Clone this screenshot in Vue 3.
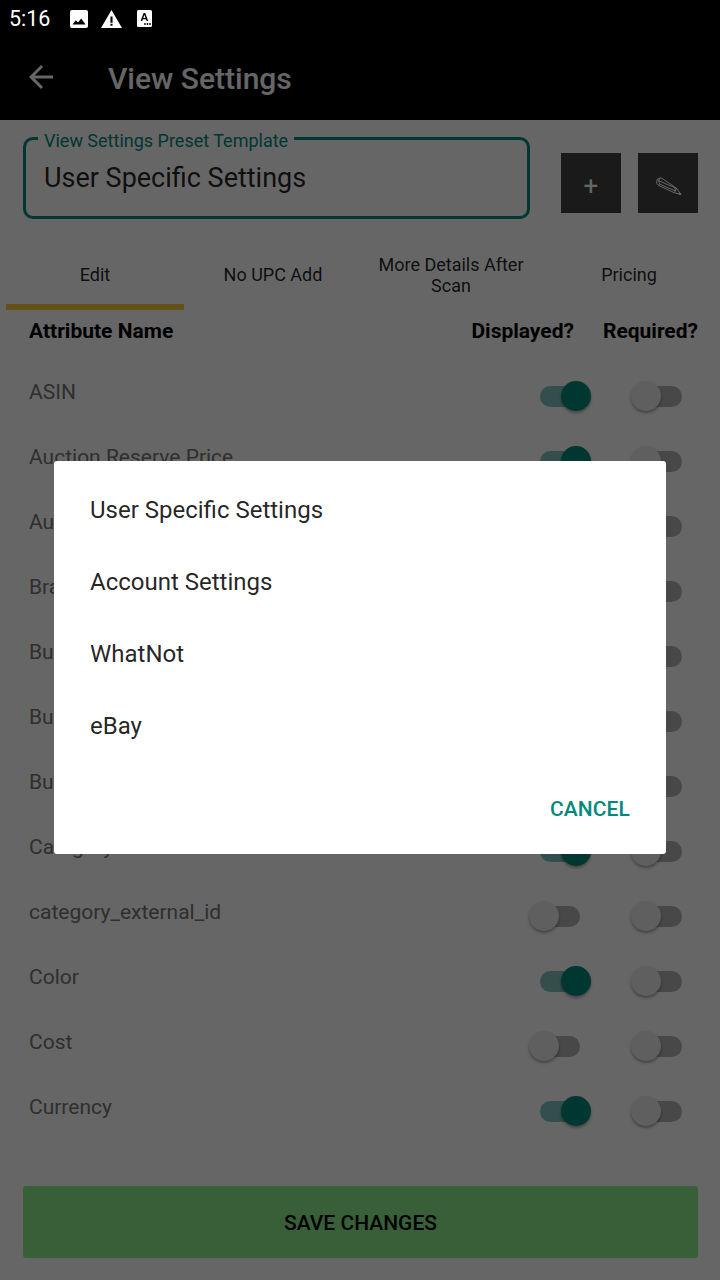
<script setup>
const tabs = [
  { label: 'Edit', active: true },
  { label: 'No UPC Add' },
  { label: 'More Details After Scan' },
  { label: 'Pricing' },
]

const attributes = [
  { name: 'ASIN', displayed: true },
  { name: 'Auction Reserve Price', displayed: true },
  { name: 'Auction Start Price', displayed: true },
  { name: 'Brand', displayed: true },
  { name: 'Bullet Point 1', displayed: true },
  { name: 'Bullet Point 2', displayed: true },
  { name: 'Buy It Now Price', displayed: true },
  { name: 'Category', displayed: true },
  { name: 'category_external_id', displayed: false },
  { name: 'Color', displayed: true },
  { name: 'Cost', displayed: false },
  { name: 'Currency', displayed: true },
]

const presets = ['User Specific Settings', 'Account Settings', 'WhatNot', 'eBay']
</script>

<template>
  <div class="screen">
    <header class="app-header">
      <div class="status-bar">
        <span class="time">5:16</span>
        <svg class="st-image" viewBox="0 0 18 18" width="18" height="18">
          <path fill="#fff" fill-rule="evenodd" d="M2 0h14a2 2 0 0 1 2 2v14a2 2 0 0 1-2 2H2a2 2 0 0 1-2-2V2a2 2 0 0 1 2-2zM2.5 14.5h13L11.2 8.6 8 12.6 5.8 10.2z" />
        </svg>
        <svg class="st-warn" viewBox="0 0 20 17" width="21" height="18">
          <path fill="#fff" fill-rule="evenodd" d="M10 0l10 17H0zM9 6v6h2V6zM9 13v2h2v-2z" />
        </svg>
        <svg class="st-card" viewBox="0 0 15 17" width="15" height="17">
          <rect width="15" height="17" rx="1.5" fill="#fff" />
          <path d="M3.6 11L6.6 3h1.6l3 8h-1.6l-.6-1.8H5.8L5.2 11zM6.3 7.9h2.2L7.4 4.8z" fill="#000" />
          <circle cx="8" cy="14" r=".9" fill="#000" />
          <circle cx="10.5" cy="14" r=".9" fill="#000" />
          <circle cx="13" cy="14" r=".9" fill="#000" />
        </svg>
      </div>
      <div class="toolbar">
        <svg class="back" viewBox="0 0 24 24" width="24" height="24">
          <path d="M24 10.5H5.7l8.4-8.4L12 0 0 12l12 12 2.1-2.1-8.4-8.4H24z" fill="#fff" />
        </svg>
        <h1>View Settings</h1>
      </div>
    </header>

    <section class="preset-row">
      <div class="preset-field">
        <span class="preset-label">View Settings Preset Template</span>
        <span class="preset-value">User Specific Settings</span>
      </div>
      <button class="square-btn plus">+</button>
      <button class="square-btn pencil">
        <svg viewBox="0 0 26 18" width="26" height="18" fill="none" stroke="#fff" stroke-width="1" stroke-linejoin="round">
          <path d="M4 .8L1 2.6.6 6.2 2.4 8.4 18 15.6l7 1.8-4.4-6L6 1.4z" />
          <path d="M1 2.6l1.8 1.2 1 3.4-1.4 1.2M2.8 3.8L4 .8M3.8 7.2L19.4 14l1.2-2.6M2.8 3.8L18.6 10.6l2 .8M18.6 10.6l.8 3.4-1.4 1.6" />
          <path d="M23.4 15.6l1.6 1.8-2.8-.6z" fill="#fff" />
        </svg>
      </button>
    </section>

    <nav class="tabs">
      <div v-for="tab in tabs" :key="tab.label" class="tab" :class="{ active: tab.active }">
        <span>{{ tab.label }}</span>
      </div>
    </nav>

    <div class="col-head">
      <span class="col-name">Attribute Name</span>
      <span>Displayed?</span>
      <span>Required?</span>
    </div>

    <div class="list">
      <div v-for="attr in attributes" :key="attr.name" class="row">
        <span class="row-name">{{ attr.name }}</span>
        <div class="switch" :class="{ on: attr.displayed }">
          <i class="track"></i><i class="thumb"></i>
        </div>
        <div class="switch">
          <i class="track"></i><i class="thumb"></i>
        </div>
      </div>
    </div>

    <footer class="footer">
      <button class="save">SAVE CHANGES</button>
    </footer>

    <div class="scrim">
      <div class="dialog">
        <div v-for="item in presets" :key="item" class="dialog-item">{{ item }}</div>
        <div class="dialog-actions">
          <span class="cancel">CANCEL</span>
        </div>
      </div>
    </div>
  </div>
</template>

<style scoped>
.screen {
  position: relative;
  width: 720px;
  height: 1280px;
  display: flex;
  flex-direction: column;
  overflow: hidden;
  background: #fff;
  font-family: Roboto, "Liberation Sans", sans-serif;
  color: #000;
}

.app-header {
  height: 120px;
  flex: none;
  background: #000;
}

.status-bar {
  position: relative;
  z-index: 3;
  height: 37px;
  display: flex;
  align-items: center;
  padding-left: 9px;
  color: #fff;
}

.time {
  font-size: 21.5px;
  width: 61px;
}

.st-warn {
  margin-left: 13px;
}

.st-card {
  margin-left: 15px;
}

.toolbar {
  display: flex;
  align-items: center;
  height: 83px;
  padding-left: 29px;
}

.toolbar h1 {
  margin: 0 0 0 55px;
  font-size: 30px;
  font-weight: 500;
  color: #fff;
}

.back {
  margin-bottom: 3px;
}

.preset-row {
  display: flex;
  align-items: flex-start;
  height: 123px;
  padding: 17px 22px 0 23px;
  box-sizing: border-box;
  flex: none;
}

.preset-field {
  position: relative;
  width: 507px;
  height: 82px;
  box-sizing: border-box;
  border: 3px solid #00897b;
  border-radius: 10px;
  display: flex;
  align-items: center;
  padding: 0 0 0 18px;
  margin-right: 31px;
}

.preset-label {
  position: absolute;
  left: 12px;
  top: -10px;
  padding: 0 6px;
  background: #fff;
  font-size: 18px;
  line-height: 22px;
  color: #00897b;
}

.preset-value {
  font-size: 27px;
  color: rgba(0, 0, 0, 0.87);
  margin-top: -1px;
}

.square-btn {
  width: 60px;
  height: 60px;
  margin-top: 16px;
  padding: 0;
  border: 0;
  background: #424242;
  color: #fff;
}

.plus {
  font-size: 26px;
  font-family: Roboto, sans-serif;
  padding-top: 6px;
}

.pencil {
  margin-left: 17px;
  display: flex;
  align-items: center;
  justify-content: center;
  padding: 6px 0 0 2px;
}

.tabs {
  display: flex;
  height: 67px;
  flex: none;
  padding-left: 6px;
}

.tab {
  width: 178px;
  flex: none;
  box-sizing: border-box;
  display: flex;
  align-items: center;
  justify-content: center;
  padding: 2px 10px 0;
  border-bottom: 6px solid transparent;
  font-size: 18px;
  line-height: 21px;
  text-align: center;
  color: rgba(0, 0, 0, 0.87);
}

.tab.active {
  border-bottom-color: #f5c73a;
}

.col-head {
  display: flex;
  gap: 29px;
  height: 53px;
  flex: none;
  padding: 0 22px 12px 29px;
  box-sizing: border-box;
  align-items: center;
  font-size: 21px;
  font-weight: 700;
}

.col-name {
  flex: 1;
}

.list {
  flex: 1;
  overflow: hidden;
}

.row {
  display: flex;
  align-items: center;
  height: 65px;
  padding: 0 27px 0 29px;
  gap: 40px;
}

.row-name {
  flex: 1;
  font-size: 21px;
  color: #757575;
  margin-bottom: 8px;
}

.switch {
  position: relative;
  width: 62px;
  height: 30px;
  flex: none;
}

.track {
  position: absolute;
  left: 11px;
  right: 11px;
  top: 5px;
  height: 21px;
  border-radius: 11px;
  background: #b4b4b4;
}

.thumb {
  position: absolute;
  left: 0;
  top: 0;
  width: 30px;
  height: 30px;
  border-radius: 50%;
  background: #eee;
  box-shadow: 0 2px 3px rgba(0, 0, 0, 0.35);
}

.switch.on .track {
  background: #80c4bd;
}

.switch.on .thumb {
  left: auto;
  right: 0;
  background: #00897b;
}

.footer {
  flex: none;
  padding: 0 22px 22px 23px;
}

.save {
  display: block;
  width: 100%;
  height: 72px;
  padding: 2px 0 0;
  border: 0;
  border-radius: 3px;
  background: #90ee90;
  color: #000;
  font-family: Roboto, sans-serif;
  font-size: 21px;
  font-weight: 500;
}

.scrim {
  position: absolute;
  inset: 0;
  z-index: 2;
  display: flex;
  justify-content: center;
  align-items: flex-start;
  padding-top: 461px;
  box-sizing: border-box;
  background: rgba(0, 0, 0, 0.6);
}

.dialog {
  width: 612px;
  height: 393px;
  box-sizing: border-box;
  padding-top: 13px;
  background: #fff;
  border-radius: 3px;
}

.dialog-item {
  height: 72px;
  line-height: 72px;
  padding-left: 36px;
  font-size: 24px;
  color: rgba(0, 0, 0, 0.87);
}

.dialog-actions {
  display: flex;
  justify-content: flex-end;
  padding: 32px 36px 0 0;
}

.cancel {
  font-size: 21px;
  font-weight: 500;
  letter-spacing: 0.1px;
  line-height: 30px;
  color: #00897b;
}
</style>
